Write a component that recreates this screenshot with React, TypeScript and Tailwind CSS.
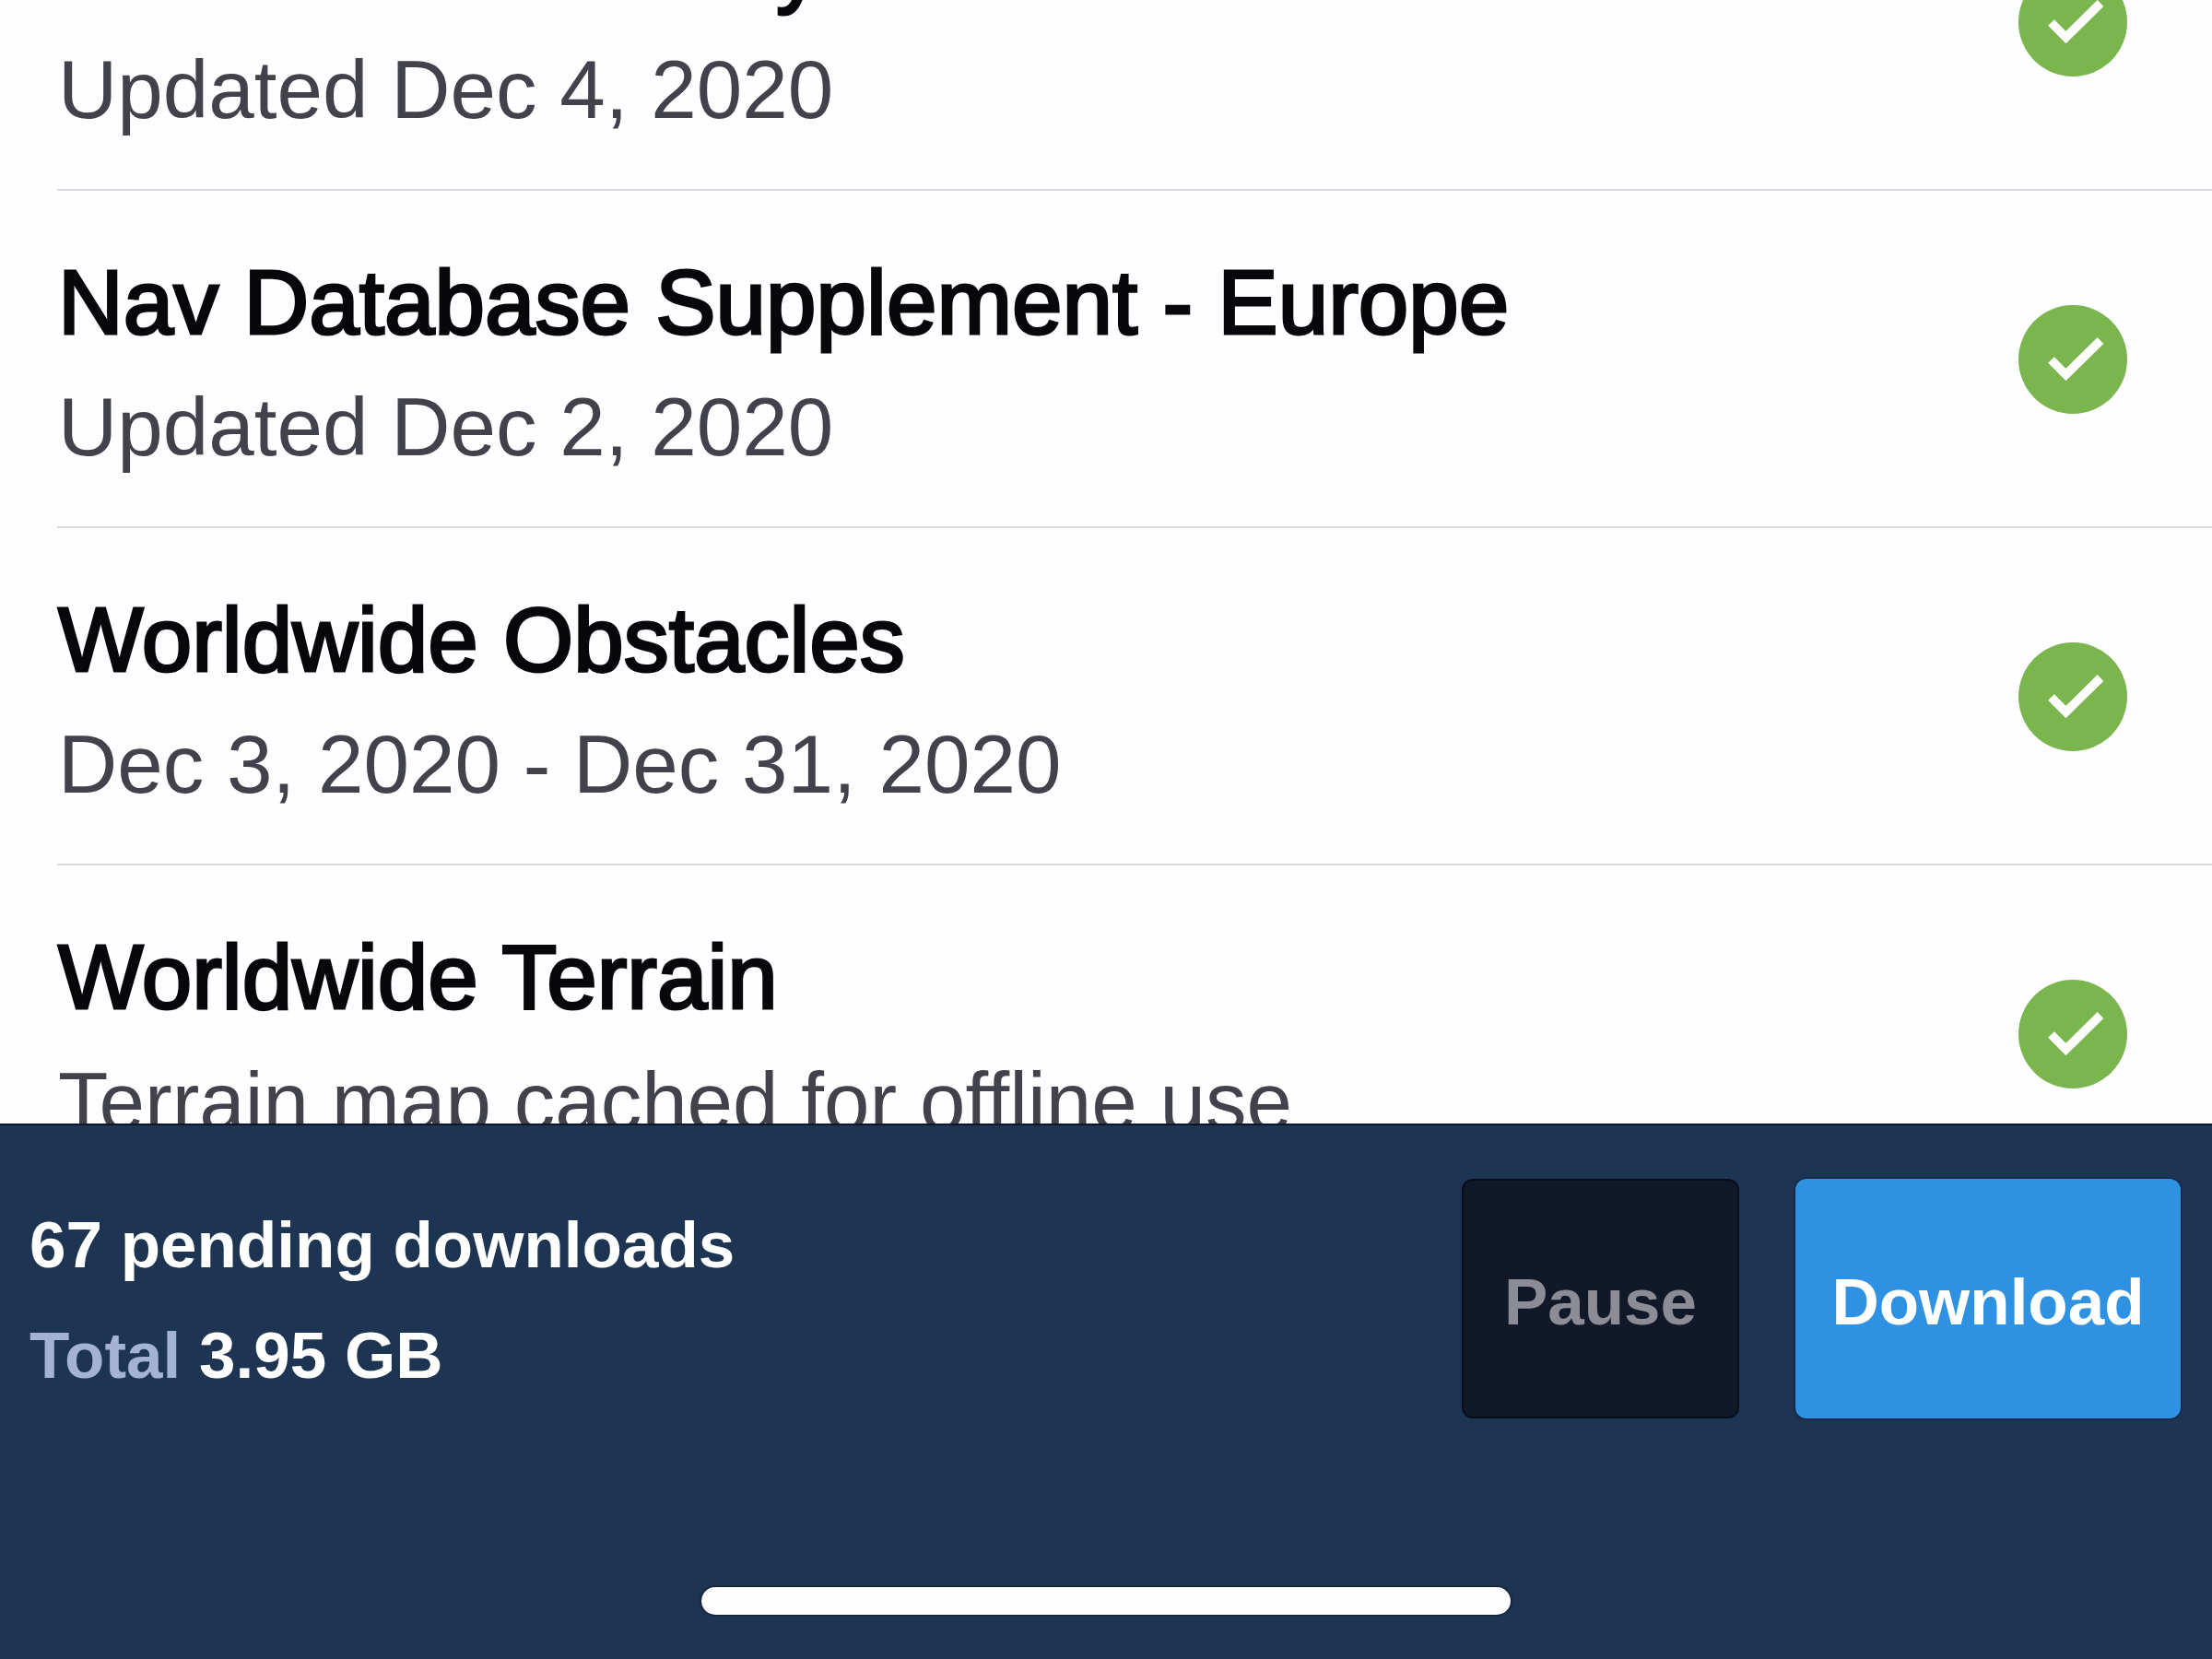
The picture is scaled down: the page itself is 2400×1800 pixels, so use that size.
const downloads = [
    { title: "Nav Database Italy", detail: "Updated Dec 4, 2020" },
    { title: "Nav Database Supplement - Europe", detail: "Updated Dec 2, 2020" },
    { title: "Worldwide Obstacles", detail: "Dec 3, 2020 - Dec 31, 2020" },
    { title: "Worldwide Terrain", detail: "Terrain map cached for offline use" },
]

function CheckBadge() {
    return (
        <svg className="size-[118px] shrink-0" viewBox="0 0 118 118" role="img" aria-label="Downloaded">
            <circle cx="59" cy="59" r="59" fill="#7ab64d" />
            <path d="M35.5 59.5 L51.5 75.5 L89 38.5" fill="none" stroke="#fdfefb" strokeWidth="9.5" />
        </svg>
    )
}

function DownloadRow({ title, detail }: { title: string; detail: string }) {
    return (
        <li className="flex justify-between items-center ml-[62px] pr-[92px] pt-px border-b-2 border-[#dad9dd]">
            <div className="pl-px pt-[55px] pb-[38px] whitespace-nowrap">
                <h2 className="text-[98px] leading-[130px] text-[#08080a] [-webkit-text-stroke:3px_#08080a]">{title}</h2>
                <p className="text-[89px] leading-[140px] text-[#42424c]">{detail}</p>
            </div>
            <CheckBadge />
        </li>
    )
}

function DownloadBar() {
    return (
        <footer className="shrink-0 bg-[#1d3552] border-t-2 border-[#0c1529] pt-[58px] pb-12 text-[71px] font-bold text-white">
            <div className="flex items-center pl-8 pr-[34px]">
                <div className="flex-1 pt-1 leading-[120px]">
                    <p>67 pending downloads</p>
                    <p><span className="text-[#a3b3d1]">Total</span> 3.95 GB</p>
                </div>
                <div className="flex gap-[61px]">
                    <button type="button" disabled className="w-[301px] h-[260px] pt-2 rounded-xl bg-[#111827] border-2 border-[#080d1c] text-[#8b8c96]">Pause</button>
                    <button type="button" className="w-[418px] h-[260px] pt-2 rounded-xl bg-[#2e91e2] shadow-[0_0_2px_1px_#12213d] cursor-pointer">Download</button>
                </div>
            </div>
            <div className="mx-auto mt-[183px] w-[878px] h-[30px] rounded-full bg-[#fefdff] shadow-[0_0_2px_1px_#12182c]" />
        </footer>
    )
}

function App() {
    return (
        <div className="h-screen flex flex-col overflow-hidden bg-[#fefdff] font-['Liberation_Sans',Arial,sans-serif]">
            <main className="flex-1 min-h-0 overflow-hidden">
                {/* list is scrolled part way down the first row */}
                <ul className="-mt-[159px]">
                    {downloads.map((item) => (
                        <DownloadRow key={item.title} title={item.title} detail={item.detail} />
                    ))}
                </ul>
            </main>
            <DownloadBar />
        </div>
    )
}

export default App
